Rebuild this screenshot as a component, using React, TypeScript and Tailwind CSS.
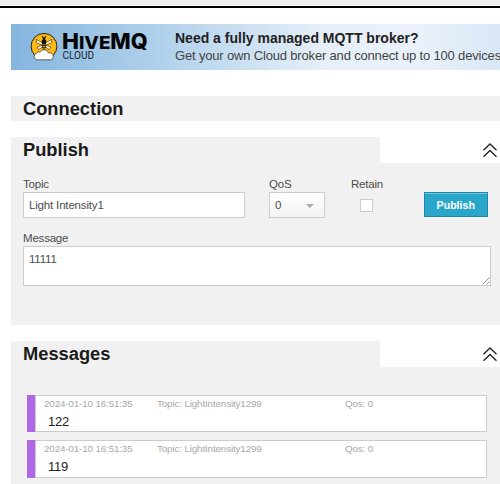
import type { ReactNode } from "react";

const messages = [
  { time: "2024-01-10 16:51:35", topic: "LightIntensity1299", qos: 0, payload: "122" },
  { time: "2024-01-10 16:51:35", topic: "LightIntensity1299", qos: 0, payload: "119" },
];

function HiveLogo() {
  return (
    <svg width="120" height="32" viewBox="0 0 120 32" className="shrink-0 overflow-visible">
      <circle cx="14" cy="15.3" r="12.9" fill="#fcb913" stroke="#15150f" strokeWidth="0.9" />
      {/* bee */}
      <path d="M13 12 6 8.3 6.6 11.8 12.5 14ZM15 12 22 8.3 21.4 11.8 15.5 14ZM12.5 14 7.2 16 8.7 18.6 12.5 16ZM15.5 14 20.8 16 19.3 18.6 15.5 16Z" fill="#fdf3dc" stroke="#3a2f10" strokeWidth="0.6" />
      <ellipse cx="14" cy="11" rx="2.5" ry="2.4" fill="#15150f" />
      <circle cx="14" cy="7.9" r="1.4" fill="#15150f" />
      <path d="M12 5.2 13.5 7M16 5.2 14.5 7M11.8 14.3h4.4M12 16.2h4M12.7 18h2.6" stroke="#15150f" strokeWidth="1.1" />
      {/* cloud */}
      <path d="M6.6 28.8a3.4 3.4 0 0 1-.4-6.4 4 4 0 0 1 4.2-1.6 4.6 4.6 0 0 1 8.2 1.2 3.5 3.5 0 0 1 4.7 3.2 3.5 3.5 0 0 1-2.6 3.6Z" fill="#fff" stroke="#15150f" strokeWidth="0.6" />
      <g fill="#050505" fontFamily="Inter, sans-serif" fontWeight="800">
        <text x="32.1" y="18.4" fontSize="21" textLength="17" lengthAdjust="spacingAndGlyphs">H</text>
        <text x="48.9" y="18.4" fontSize="18" textLength="31.6" lengthAdjust="spacingAndGlyphs">IVE</text>
        <text x="80.3" y="18.4" fontSize="21" textLength="37.4" lengthAdjust="spacingAndGlyphs">MQ</text>
      </g>
      <text x="32.5" y="27.7" fontSize="10.4" fill="#1a242c" fontFamily="Roboto, sans-serif" textLength="31.5" lengthAdjust="spacingAndGlyphs">CLOUD</text>
    </svg>
  );
}

function CollapseIcon() {
  return (
    <svg width="14" height="15" viewBox="0 0 14 15" fill="none" stroke="#222" strokeWidth="1.3">
      <path d="M.5 7.3 7 1l6.5 6.3M.5 13.8 7 7.5l6.5 6.3" />
    </svg>
  );
}

function SectionHeader({ title }: { title: string }) {
  return (
    <div className="flex h-[26px] justify-between">
      <h2 className="pl-3 text-[18.3px] leading-[26px] font-bold text-[#1a1a1a]">{title}</h2>
      <div className="flex w-[120.5px] items-center justify-end bg-white pr-[3.5px]">
        <CollapseIcon />
      </div>
    </div>
  );
}

function Label({ children }: { children: ReactNode }) {
  return <div className="h-[15px] text-[11.5px] leading-[15px] tracking-[-0.2px] text-[#4d4d4d]">{children}</div>;
}

export default function App() {
  return (
    <div className="h-[484px] w-[500px] overflow-hidden bg-white font-['Liberation_Sans',Arial,sans-serif]">
      <div className="h-2 border-b-2 border-black bg-white">
        <div className="h-[5px] bg-[#f0f0f0]" />
      </div>

      <div className="pt-4 pl-[11px]">
        {/* Cloud banner */}
        <div className="flex h-[46px] bg-[linear-gradient(90deg,#84b6de_0%,#b4d3ec_33%,#e7f0f9_65%,#eaf1fa_83%,#d9e7f5_100%)] pt-[7px] pl-[19px]">
          <HiveLogo />
          <div className="pl-[25px] whitespace-nowrap">
            <div className="text-[14px] leading-[15px] font-bold text-[#222]">Need a fully managed MQTT broker?</div>
            <div className="mt-px text-[13px] leading-[18px] tracking-[-0.17px] text-[#444]">
              Get your own Cloud broker and connect up to 100 devices
            </div>
          </div>
        </div>

        <section className="mt-[26px] h-[25px] bg-[#f1f1f1]">
          <h2 className="pl-3 text-[18.3px] leading-[26px] font-bold text-[#1a1a1a]">Connection</h2>
        </section>

        <section className="mt-4 h-[188px] bg-[#f1f1f1]">
          <SectionHeader title="Publish" />
          <div className="flex pt-[14px] pl-3">
            <div className="w-[246px]">
              <Label>Topic</Label>
              <div className="h-[26px] w-[222px] border border-[#ccc] bg-white pl-[5px] text-[11.5px] leading-[25px] tracking-[-0.17px] text-[#4d4d4d]">
                Light Intensity1
              </div>
            </div>
            <div className="w-[82px]">
              <Label>QoS</Label>
              <div className="flex h-[26px] w-14 items-center justify-between border border-[#ccc] bg-linear-to-b from-white to-[#f3f3f3] pt-px pr-[10px] pl-[5px] text-[11.5px] text-[#4d4d4d]">
                <span>0</span>
                <svg width="8" height="4" viewBox="0 0 8 4">
                  <path d="M0 0h8L4 4Z" fill="#aaa" />
                </svg>
              </div>
            </div>
            <div className="w-[73px]">
              <Label>Retain</Label>
              <div className="mt-[7px] ml-[8.5px] size-[13px] border border-[#ccc] bg-white" />
            </div>
            <div className="mt-[15px] h-[25px] w-[63.5px] border border-[#1e88a8] bg-[#2ba6cb] text-center text-[10.6px] leading-6 font-bold text-white shadow-[inset_0_1px_0_#72c4dc]">
              Publish
            </div>
          </div>
          <div className="pt-[13px] pl-3">
            <Label>Message</Label>
            <div className="flex h-10 w-[468px] items-end justify-between border border-[#ccc] bg-white pl-[5px] text-[11.5px] tracking-[-0.17px] text-[#4d4d4d]">
              <span className="self-start leading-[25px]">11111</span>
              <svg width="8" height="8" viewBox="0 0 8 8" stroke="#888" strokeWidth="0.9">
                <path d="M.5 7.5l7-7M4.5 7.5l3-3" />
              </svg>
            </div>
          </div>
        </section>

        <section className="mt-4 h-[143px] bg-[#f1f1f1]">
          <SectionHeader title="Messages" />
          <div className="flex flex-col gap-[7.8px] pt-7 pl-4">
            {messages.map((m) => (
              <div key={m.payload} className="flex h-[37.4px] w-[460px]">
                <div className="w-2 bg-[#b067e6]" />
                <div className="flex-1 border border-[#ccc] bg-white pl-2">
                  <div className="flex h-[15px] text-[9.8px] leading-[16px] tracking-[-0.13px] text-[#a8a8a8]">
                    <span className="w-[113px]">{m.time}</span>
                    <span className="w-[188px]">Topic: {m.topic}</span>
                    <span>Qos: {m.qos}</span>
                  </div>
                  <div className="pl-1 text-[13px] leading-[21px] tracking-[-0.2px] text-[#222]">{m.payload}</div>
                </div>
              </div>
            ))}
          </div>
        </section>
      </div>
    </div>
  );
}
